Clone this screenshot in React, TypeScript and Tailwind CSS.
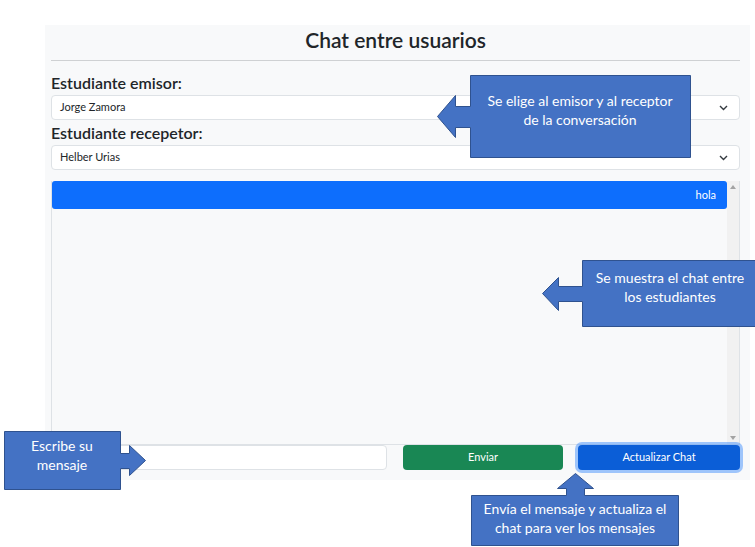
import React from "react";

function Chevron() {
  return (
    <svg width="9" height="6" viewBox="0 0 9 6" className="shrink-0">
      <polyline points="1,1 4.5,4.5 8,1" fill="none" stroke="#343a40" strokeWidth="1.4" />
    </svg>
  );
}

function Select({ value }: { value: string }) {
  return (
    <div className="h-[25px] bg-white border border-[#dee2e6] rounded-[4px] flex items-center justify-between pl-[8px] pr-[11px] text-[11px] text-[#212529]">
      <span>{value}</span>
      <Chevron />
    </div>
  );
}

const callouts = [
  "470.5,75.5 690.5,75.5 690.5,157.5 470.5,157.5 470.5,127.5 455.5,127.5 455.5,137.5 437.5,116.5 455.5,95.5 455.5,106.5 470.5,106.5",
  "582.5,260.5 757.5,260.5 757.5,326.5 582.5,326.5 582.5,301.5 558.5,301.5 558.5,310.5 542.5,293.5 558.5,277.5 558.5,286.5 582.5,286.5",
  "4.5,431.5 120.5,431.5 120.5,453.5 129.5,453.5 129.5,445.5 145.5,460.5 129.5,475.5 129.5,468.5 120.5,468.5 120.5,489.5 4.5,489.5",
  "471.5,495.5 566.5,495.5 566.5,488.5 557.5,488.5 575.5,473.5 593.5,488.5 584.5,488.5 584.5,495.5 678.5,495.5 678.5,545.5 471.5,545.5",
];

function Note({ x, y, lines }: { x: number; y: number; lines: string[] }) {
  return (
    <div
      className="absolute -translate-x-1/2 text-center text-white text-[14px] leading-[19px] whitespace-nowrap"
      style={{ left: x, top: y, fontFamily: "Lato, sans-serif" }}
    >
      {lines.map((l) => (
        <div key={l}>{l}</div>
      ))}
    </div>
  );
}

export default function App() {
  return (
    <div
      className="relative w-[755px] h-[547px] bg-white overflow-hidden text-[#212529]"
      style={{ fontFamily: "Lato, 'Noto Sans', sans-serif" }}
    >
      <div className="pt-[25px] pl-[45px]">
        <div className="w-[705px] h-[455px] bg-[#f8f9fa] pl-[6px] pr-[10px] flex flex-col">
          <h1 className="h-[36px] border-b border-[#cfd1d3] text-center text-[21px] font-semibold leading-[30px]">
            Chat entre usuarios
          </h1>
          <label className="mt-[10px] text-[16px] font-semibold leading-[24px]">Estudiante emisor:</label>
          <Select value="Jorge Zamora" />
          <label className="text-[16px] font-semibold leading-[25px]">Estudiante recepetor:</label>
          <Select value="Helber Urias" />

          {/* chat */}
          <div className="mt-[11px] h-[264px] border border-[#dee2e6] border-t-0 flex">
            <div className="flex-1">
              <div className="h-[28px] bg-[#0d6efd] rounded-[3px] flex items-center justify-end pr-[11px] text-[11px] text-white">
                hola
              </div>
            </div>
            <div className="w-[12px] bg-[#f1f1f1] flex flex-col justify-between items-center py-[4px]">
              <svg width="6" height="4" viewBox="0 0 6 4">
                <polygon points="0,4 3,0 6,4" fill="#a3a3a3" />
              </svg>
              <svg width="6" height="4" viewBox="0 0 6 4">
                <polygon points="0,0 3,4 6,0" fill="#a3a3a3" />
              </svg>
            </div>
          </div>

          <div className="flex items-center gap-[16px] h-[25px]">
            <div className="w-[336px] h-[25px] bg-white border border-[#dee2e6] rounded-[4px]" />
            <button className="w-[160px] h-[25px] bg-[#198754] rounded-[4px] text-white text-[11px]">Enviar</button>
            <button className="ml-[-1px] w-[162px] h-[25px] bg-[#0b5ed7] rounded-[4px] text-white text-[11px] shadow-[0_0_0_3px_rgba(49,132,253,0.45)]">
              Actualizar Chat
            </button>
          </div>
        </div>
      </div>

      <svg className="absolute inset-0 pointer-events-none" width="755" height="547">
        {callouts.map((p) => (
          <polygon key={p} points={p} fill="#4472c4" stroke="#2f528f" strokeWidth="1" />
        ))}
      </svg>
      <Note x={580} y={91} lines={["Se elige al emisor y al receptor", "de la conversación"]} />
      <Note x={670} y={268} lines={["Se muestra el chat entre", "los estudiantes"]} />
      <Note x={62} y={436} lines={["Escribe su", "mensaje"]} />
      <Note x={575} y={499} lines={["Envía el mensaje y actualiza el", "chat para ver los mensajes"]} />
    </div>
  );
}
